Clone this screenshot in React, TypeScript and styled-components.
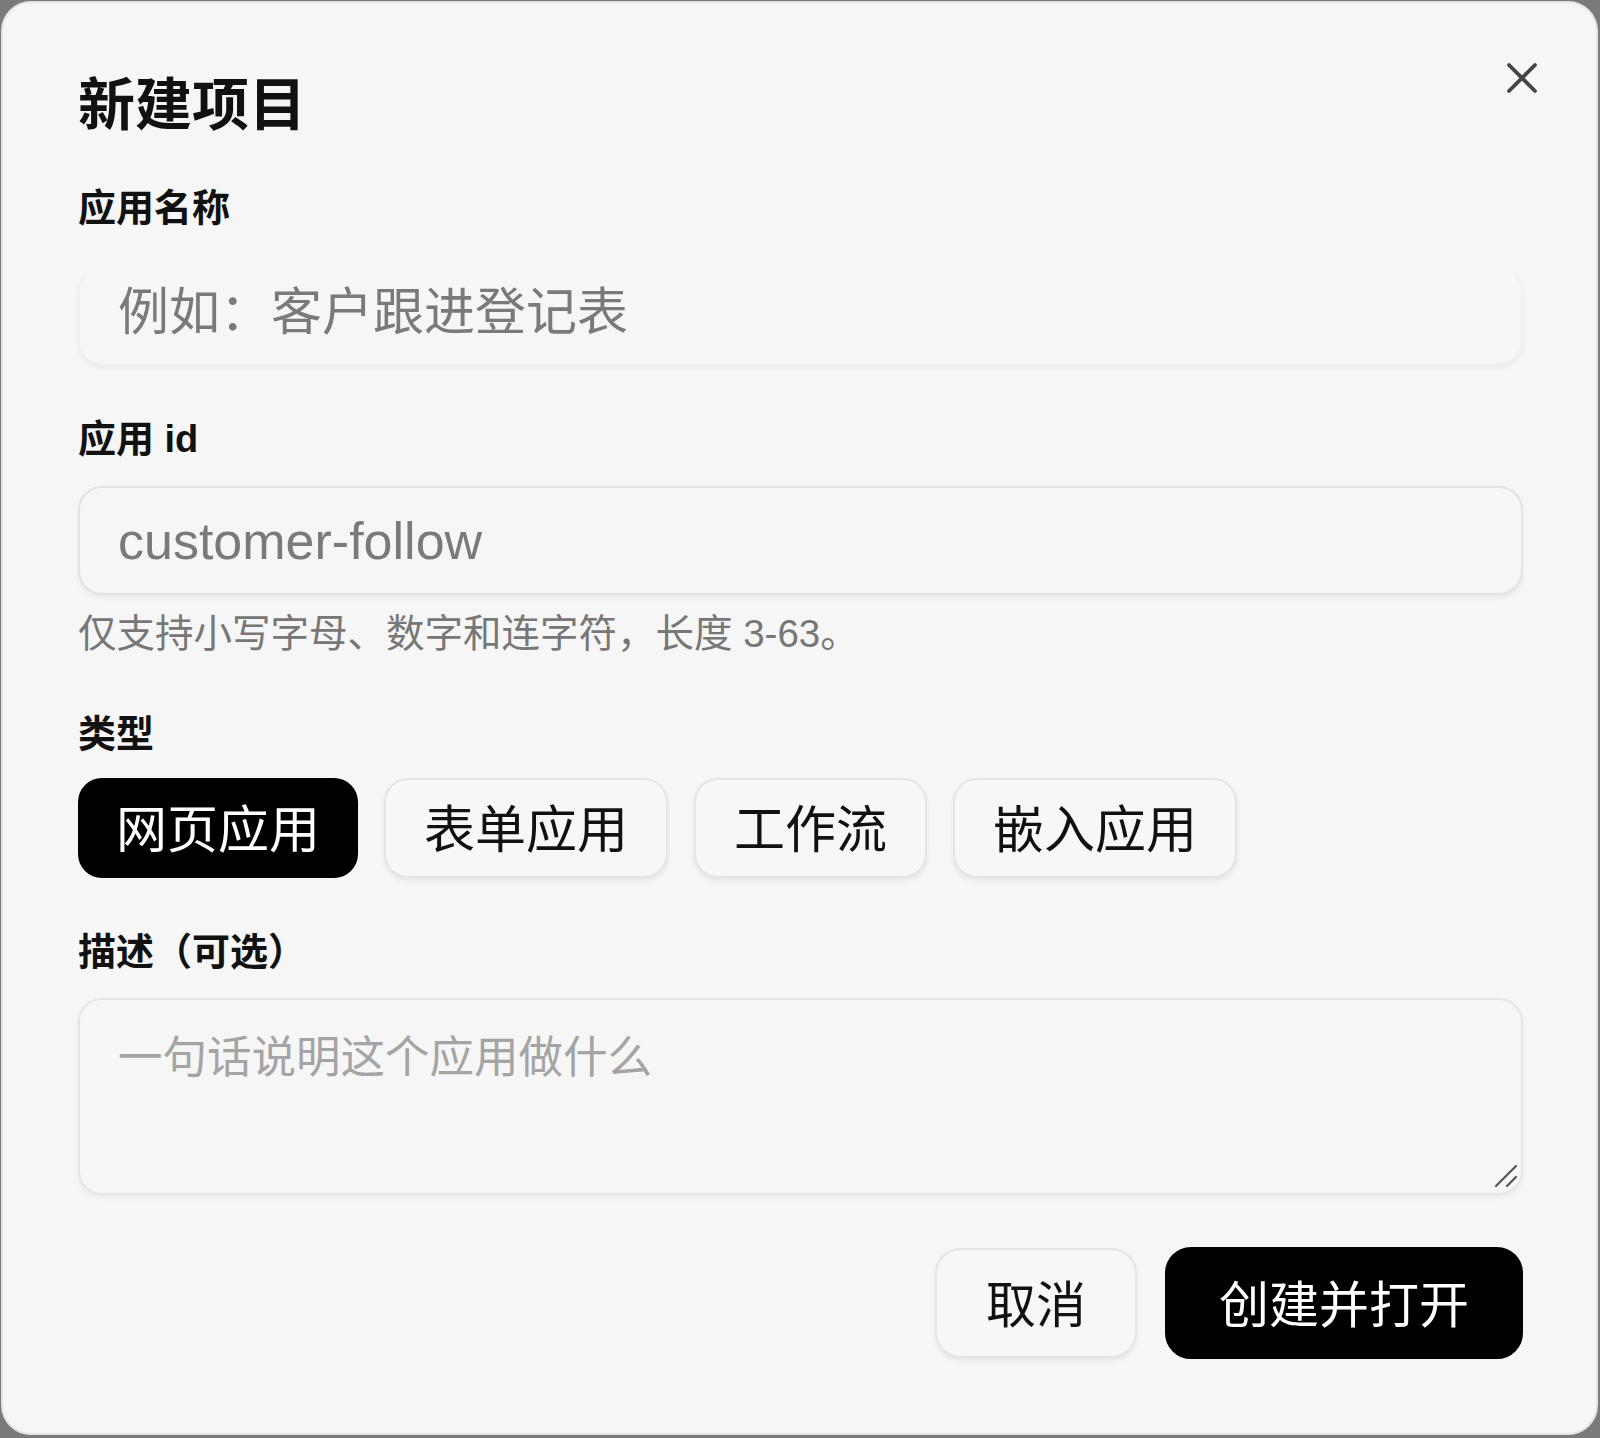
import React, { useState } from "react";
import styled, { createGlobalStyle } from "styled-components";

const GlobalStyle = createGlobalStyle`
    html, body {
        margin: 0;
        padding: 0;
        background-color: #7a7a7a;
    }
    * {
        box-sizing: border-box;
    }
`;

const FONT = `"Liberation Sans", "Noto Sans CJK SC", sans-serif`;

const Backdrop = styled.div`
    width: 1600px;
    height: 1438px;
    padding: 1px 2px 3px 1px;
`;

const Dialog = styled.div`
    position: relative;
    width: 100%;
    height: 100%;
    background-color: #f6f6f6;
    border: 2px solid #e4e4e4;
    border-radius: 30px;
    padding: 66px 73px 0 75px;
    display: flex;
    flex-direction: column;
    font-family: ${FONT};
    color: #111111;
`;

const Title = styled.h1`
    margin: 0;
    font-size: 57px;
    line-height: 72px;
    font-weight: 700;
    color: #111111;
`;

const CloseButton = styled.button`
    position: absolute;
    top: 55px;
    right: 54px;
    width: 40px;
    height: 40px;
    padding: 0;
    border: none;
    background: transparent;
    display: flex;
    align-items: center;
    justify-content: center;
    cursor: pointer;
`;

const Label = styled.label<{ $top: number }>`
    display: block;
    margin-top: ${(props) => props.$top}px;
    font-size: 38px;
    line-height: 48px;
    font-weight: 700;
    color: #111111;
`;

const TextInput = styled.input<{ $top: number; $height: number; $size: number; $soft?: boolean }>`
    display: block;
    width: 100%;
    height: ${(props) => props.$height}px;
    margin-top: ${(props) => props.$top}px;
    padding: 0 38px ${(props) => (props.$soft ? 8 : 0)}px;
    font-family: ${FONT};
    font-size: ${(props) => props.$size}px;
    color: #222222;
    background-color: #f6f6f6;
    border: 2px solid ${(props) => (props.$soft ? "#f1f1f1" : "#e2e2e2")};
    border-top-color: ${(props) => (props.$soft ? "#f5f5f5" : "#e2e2e2")};
    border-radius: 24px;
    box-shadow: 0 3px 5px rgba(0, 0, 0, 0.05);
    outline: none;

    &::placeholder {
        color: #7a7a7a;
    }
`;

const Hint = styled.div`
    margin-top: 15px;
    font-size: 38.5px;
    line-height: 48px;
    color: #777777;
`;

const TypeRow = styled.div`
    display: flex;
    flex-direction: row;
    gap: 26px;
    margin-top: 20px;
`;

const TypeButton = styled.button<{ $active: boolean }>`
    height: 100px;
    padding: 0 38px 5px;
    font-family: ${FONT};
    font-size: 51px;
    font-weight: 400;
    color: ${(props) => (props.$active ? "#ffffff" : "#111111")};
    background-color: ${(props) => (props.$active ? "#000000" : "#f7f7f7")};
    border: ${(props) => (props.$active ? "0" : "2px solid #e5e5e5")};
    border-radius: 24px;
    box-shadow: ${(props) => (props.$active ? "none" : "0 3px 5px rgba(0, 0, 0, 0.07)")};
    cursor: pointer;
`;

const TextAreaWrap = styled.div`
    position: relative;
    margin-top: 22px;
`;

const TextArea = styled.textarea`
    display: block;
    width: 100%;
    height: 197px;
    padding: 27px 38px;
    font-family: ${FONT};
    font-size: 44.5px;
    line-height: 62px;
    color: #222222;
    background-color: #f6f6f6;
    border: 2px solid #e6e6e6;
    border-radius: 24px;
    box-shadow: 0 3px 5px rgba(0, 0, 0, 0.05);
    outline: none;
    resize: none;

    &::placeholder {
        color: #a4a4a4;
    }
`;

const ResizeGrip = styled.svg`
    position: absolute;
    right: 4px;
    bottom: 6px;
    pointer-events: none;
`;

const Footer = styled.div`
    display: flex;
    flex-direction: row;
    justify-content: flex-end;
    align-items: center;
    gap: 28px;
    margin-top: 52px;
`;

const FooterButton = styled.button<{ $primary?: boolean }>`
    height: ${(props) => (props.$primary ? 112 : 110)}px;
    padding: 0 ${(props) => (props.$primary ? 52 : 49)}px 4px;
    font-family: ${FONT};
    font-size: 50px;
    font-weight: 400;
    color: ${(props) => (props.$primary ? "#ffffff" : "#111111")};
    background-color: ${(props) => (props.$primary ? "#000000" : "#f7f7f7")};
    border: 2px solid ${(props) => (props.$primary ? "#000000" : "#e5e5e5")};
    border-radius: 26px;
    box-shadow: ${(props) => (props.$primary ? "none" : "0 3px 5px rgba(0, 0, 0, 0.07)")};
    cursor: pointer;
`;

const types = ["网页应用", "表单应用", "工作流", "嵌入应用"];

const App = () => {
    const [selectedType, setSelectedType] = useState<string>("网页应用");

    return (
        <>
            <GlobalStyle />
            <Backdrop>
                <Dialog>
                    <Title>新建项目</Title>
                    <CloseButton aria-label="关闭">
                        <svg width="32" height="32" viewBox="0 0 32 32" fill="none">
                            <path
                                d="M3 3 L29 29 M29 3 L3 29"
                                stroke="#444444"
                                strokeWidth="3.8"
                                strokeLinecap="round"
                            />
                        </svg>
                    </CloseButton>

                    <Label $top={43}>应用名称</Label>
                    <TextInput
                        $top={35}
                        $height={98}
                        $size={51}
                        $soft
                        placeholder="例如：客户跟进登记表"
                    />

                    <Label $top={50}>应用 id</Label>
                    <TextInput $top={23} $height={109} $size={52} placeholder="customer-follow" />
                    <Hint>仅支持小写字母、数字和连字符，长度 3-63。</Hint>

                    <Label $top={52}>类型</Label>
                    <TypeRow>
                        {types.map((type) => (
                            <TypeButton
                                key={type}
                                $active={selectedType === type}
                                onClick={() => setSelectedType(type)}
                            >
                                {type}
                            </TypeButton>
                        ))}
                    </TypeRow>

                    <Label $top={50}>描述（可选）</Label>
                    <TextAreaWrap>
                        <TextArea placeholder="一句话说明这个应用做什么" />
                        <ResizeGrip width="26" height="26" viewBox="0 0 26 26">
                            <path
                                d="M3 23 L23 3 M14 23 L23 14"
                                stroke="#555555"
                                strokeWidth="2.2"
                                strokeLinecap="round"
                            />
                        </ResizeGrip>
                    </TextAreaWrap>

                    <Footer>
                        <FooterButton>取消</FooterButton>
                        <FooterButton $primary>创建并打开</FooterButton>
                    </Footer>
                </Dialog>
            </Backdrop>
        </>
    );
};

export default App;
